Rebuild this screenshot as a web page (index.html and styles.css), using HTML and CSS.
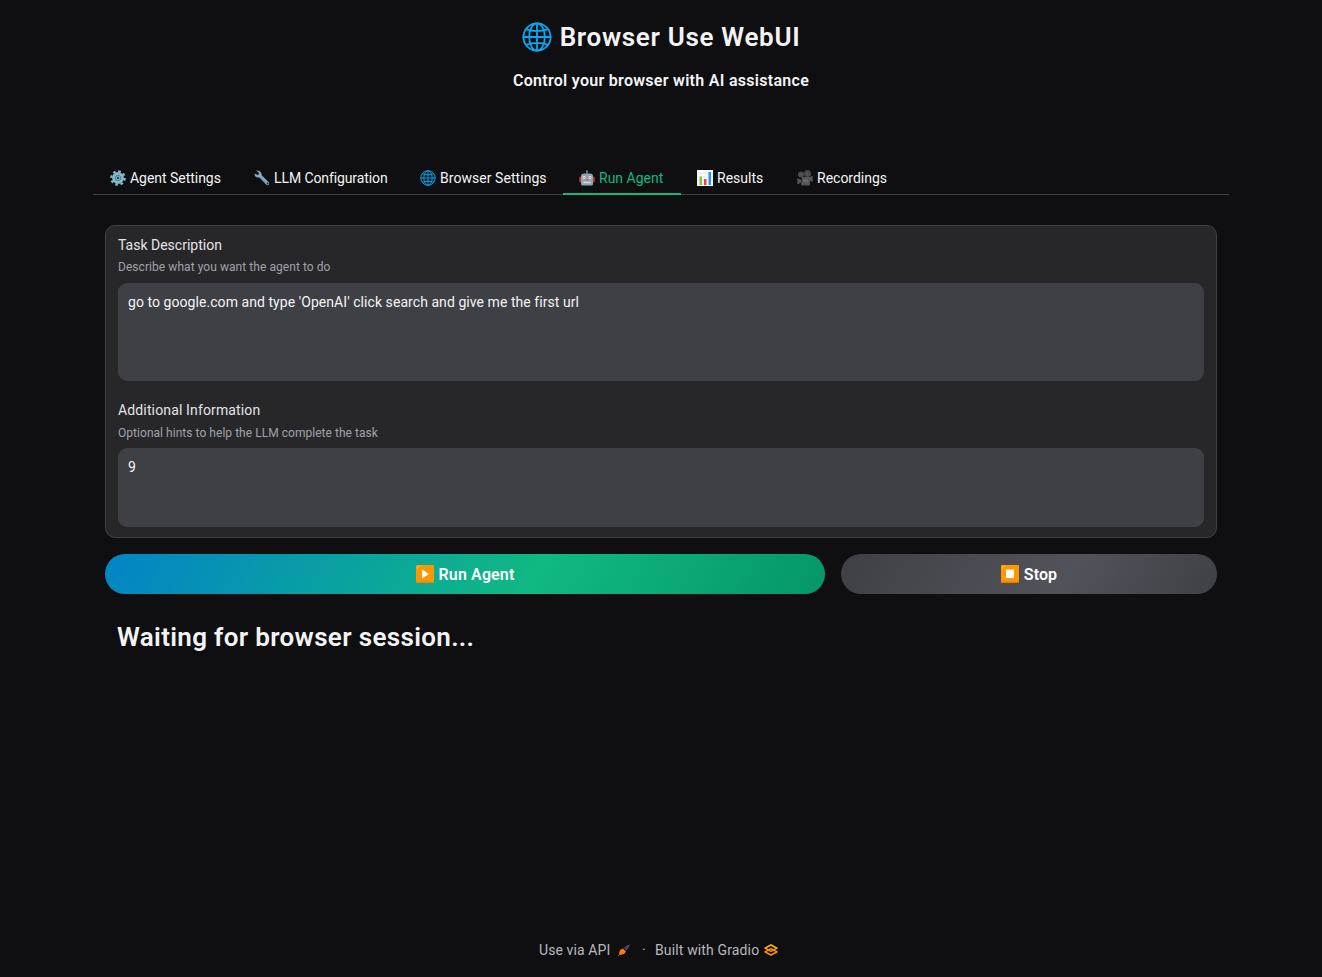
FILE: index.html
```html
<!DOCTYPE html>
<html lang="en">
<head>
<meta charset="utf-8">
<title>Browser Use WebUI</title>
<link rel="stylesheet" href="styles.css">
</head>
<body>
<svg class="defs" aria-hidden="true">
  <symbol id="globe" viewBox="0 0 30 30"><g fill="none" stroke="#03a9f4" stroke-width="1.8"><circle cx="15" cy="15" r="13.6"/><ellipse cx="15" cy="15" rx="7.8" ry="13.6"/><path d="M15 1.4v27.2M1.4 15h27.2M4 7.2c6 2.5 16 2.5 22 0M4 22.8c6-2.5 16-2.5 22 0"/></g></symbol>
</svg>
<main class="page">
  <header class="header">
    <h1 class="title"><svg class="title-icon"><use href="#globe"/></svg><span>Browser Use WebUI</span></h1>
    <h3 class="subtitle">Control your browser with AI assistance</h3>
  </header>
  <nav class="tabs">
    <button class="tab tab-agent"><svg class="emoji" viewBox="0 0 16 16"><g fill="none" stroke="#83b9ca"><circle cx="8" cy="8" r="4.3" stroke-width="3.2"/><circle cx="8" cy="8" r="6.7" stroke-width="2.3" stroke-dasharray="2.6 2.66"/></g><circle cx="8" cy="8" r="2.9" fill="#5e8d9c"/><circle cx="8" cy="8" r="2" fill="#83b9ca"/><circle cx="8" cy="8" r="1" fill="#17242a"/></svg><span>Agent Settings</span></button>
    <button class="tab tab-llm"><svg class="emoji" viewBox="0 0 16 16"><path d="M5.800 5.700l7.800 7.800" stroke="#82aec0" stroke-width="3.200" stroke-linecap="round"/><path d="M2.200.6l2.500 1.800.2 2-1.300.7L.5 3.400C.4 6 2.200 8 5.400 7.500L7.600 5.300C8 2.500 5.500.2 2.200.6z" fill="#82aec0"/><circle cx="13.600" cy="13.600" r="1" fill="#263238"/><path d="M6.500 7l5 5" stroke="#648f9f" stroke-width=".7"/></svg><span>LLM Configuration</span></button>
    <button class="tab tab-browser"><svg class="emoji"><use href="#globe"/></svg><span>Browser Settings</span></button>
    <button class="tab tab-run active"><svg class="emoji" viewBox="0 0 16 16"><path d="M8 4V2" stroke="#90a4ae" stroke-width="1"/><circle cx="8" cy="1.300" r="1" fill="#78909c"/><path d="M.3 8q0-1.500 1.500-1.500v6Q.3 12.500.3 11zM15.700 8q0-1.500-1.500-1.500v6q1.500 0 1.500-1.500z" fill="#e53935"/><path d="M2 6q0-2.500 3-2.500h6q3 0 3 2.500v8q0 1.500-1.500 1.500h-9Q2 15.500 2 14z" fill="#90a4ae"/><circle cx="5" cy="7.500" r="1.400" fill="#eee"/><circle cx="11" cy="7.500" r="1.400" fill="#eee"/><circle cx="5" cy="7.500" r=".6" fill="#d32f2f"/><circle cx="11" cy="7.500" r=".6" fill="#d32f2f"/><path d="M8 8.800l.8 1.600H7.200z" fill="#d32f2f"/><path d="M4.500 12.500h7" stroke="#eee" stroke-width="1.500" stroke-dasharray="1.400 .5"/></svg><span>Run Agent</span></button>
    <button class="tab tab-results"><svg class="emoji" viewBox="0 0 16 16"><path fill="#fafafa" d="M0 0h16v16H0z"/><path d="M0 3.500h16M0 7h16M0 10.500h16M0 14h16" stroke="#ddd" stroke-width=".6"/><path fill="#8bc34a" d="M2.500 6.500H5V15H2.500z"/><path fill="#f44336" d="M7 9h2.500v6H7z"/><path fill="#2196f3" d="M11.500 2H14v13h-2.500z"/></svg><span>Results</span></button>
    <button class="tab tab-recordings"><svg class="emoji" viewBox="0 0 16 16"><circle cx="4" cy="4.500" r="3.100" fill="#4a4a4a"/><circle cx="10.500" cy="3.600" r="3.500" fill="#484848"/><circle cx="4" cy="4.500" r=".8" fill="#606060"/><circle cx="10.500" cy="3.600" r="1" fill="#606060"/><path d="M5 7h8l2.700-1.300v6L13 11v3.500q0 1-1 1H5q-1 0-1-1zM.3 8l3.700 2v2.500L.3 14.500z" fill="#555"/><path d="M6 9h5v3H6z" fill="#666"/></svg><span>Recordings</span></button>
  </nav>
  <section class="content">
    <div class="panel">
      <label class="field"><span class="label label-task">Task Description</span><span class="info info-task">Describe what you want the agent to do</span><span class="input input-task">go to google.com and type 'OpenAI' click search and give me the first url</span></label>
      <label class="field"><span class="label label-extra">Additional Information</span><span class="info info-extra">Optional hints to help the LLM complete the task</span><span class="input input-extra">9</span></label>
    </div>
    <div class="actions">
      <button class="action run"><svg class="action-icon" viewBox="0 0 18 18"><rect width="18" height="18" rx="1" fill="#ff9800"/><path d="M0 16.500h18V18H0z" fill="#d98a20"/><path d="M1 4Q1 1 4 1" stroke="#ffbd52" fill="none"/><path d="M6 4.500v9l7-4.500z" fill="#fff"/></svg><span>Run Agent</span></button>
      <button class="action stop"><svg class="action-icon" viewBox="0 0 18 18"><rect width="18" height="18" rx="1" fill="#ff9800"/><path d="M0 16.500h18V18H0z" fill="#ef7c00"/><path d="M1 4Q1 1 4 1" stroke="#ffbd52" fill="none"/><path d="M5 4.500h8v8.500H5z" fill="#fff"/></svg><span>Stop</span></button>
    </div>
    <h1 class="waiting">Waiting for browser session...</h1>
  </section>
  <footer class="footer">
    <span class="api">Use via API</span>
    <svg class="rocket" viewBox="0 0 12 12"><path d="M0 12l2.500-2.500" stroke="#b85c0a" stroke-width="1"/><path d="M2 6l3-1.500L8 7.500 6.300 9.800 2.500 11 1 9.500z" fill="#ff7c00"/><path d="M6 4L8.500 1.500l2-.5L12 0l-.7 2-.5 1.700L8.500 6.500z" fill="#3c4963"/><path d="M5 3.800l3.500 3.500" stroke="#20283a" stroke-width=".7"/></svg>
    <span class="dot">·</span>
    <span class="built">Built with Gradio</span>
    <svg class="gradio" viewBox="0 0 14 12"><path d="M7 1l6 3.200-6 3.200-6-3.200zM7 4.600l6 3.200-6 3.200-6-3.200z" fill="none" stroke="#f90" stroke-width="1.500" stroke-linejoin="round"/><path d="M1 4.200L7 1l6 3.200" fill="none" stroke="#ffb000" stroke-width="1.200"/></svg>
  </footer>
</main>
</body>
</html>
```
FILE: styles.css
```css
* { box-sizing: border-box; }
body { margin: 0; background: #0f0f11; color: #f4f4f5; font-family: Roboto, "Noto Sans", sans-serif; font-size: 14px; }
button { font: inherit; color: inherit; border: 0; background: none; padding: 0; margin: 0; }
span { white-space: nowrap; }
svg { display: block; flex: none; }
.defs { display: none; }
.page { height: 977px; padding: 20px 93px 0; display: flex; flex-direction: column; }
.header { height: 142px; display: flex; flex-direction: column; align-items: center; }
.title { display: flex; align-items: center; gap: 8px; height: 34px; margin: 0; font-size: 26px; font-weight: 600; letter-spacing: .68px; }
.title-icon { width: 30px; height: 30px; }
.subtitle { margin: 17px 0 0; font-size: 16px; line-height: 20px; font-weight: 600; letter-spacing: .29px; }
.tabs { display: flex; height: 33px; border-bottom: 1px solid #3f3f46; }
.tab { display: flex; align-items: center; gap: 4px; height: 33px; padding: 1px 0 0 17px; border-bottom: 2px solid transparent; }
.emoji { width: 16px; height: 16px; }
.tab-agent { width: 144px; letter-spacing: -.03px; }
.tab-llm { width: 166px; letter-spacing: -.1px; }
.tab-browser { width: 160px; letter-spacing: .05px; }
.tab-run { width: 118px; padding-left: 16px; }
.tab-results { width: 99px; padding-left: 16px; }
.active { color: #10b981; border-color: #10b981; }
.content { padding: 30px 12px 0; height: 741px; }
.panel { height: 313px; padding: 9px 12px 10px; background: #27272a; border: 1px solid #3f3f46; border-radius: 10px; display: flex; flex-direction: column; gap: 19px; }
.field { display: flex; flex-direction: column; }
.label { line-height: 20px; color: #e4e4e7; }
.label-extra { letter-spacing: .14px; }
.info { margin-top: 4px; height: 24px; font-size: 12px; line-height: 17px; color: #a1a1aa; }
.info-task { letter-spacing: .06px; }
.info-extra { padding-top: 1px; letter-spacing: .04px; }
.input { padding: 9px 10px; line-height: 20px; background: #3f3f46; border-radius: 9px; }
.input-task { height: 98px; letter-spacing: .06px; }
.input-extra { height: 79px; }
.actions { display: flex; gap: 16px; margin-top: 16px; }
.action { display: flex; align-items: center; justify-content: center; gap: 5px; height: 40px; border-radius: 20px; font-size: 16px; font-weight: 600; letter-spacing: .13px; color: #fff; }
.run { width: 720px; background: linear-gradient(120deg, #0284c7 0%, #10b981 60%, #059669 100%); }
.stop { width: 376px; background: linear-gradient(120deg, #3f4045 0%, #52525b 60%, #3f4045 100%); }
.action-icon { width: 18px; height: 18px; }
.waiting { margin: 26px 12px 0; font-size: 26px; line-height: 34px; font-weight: 600; letter-spacing: .34px; }
.footer { display: flex; align-items: center; height: 28px; padding-left: 446px; color: #b6b8bd; }
.api { width: 79px; letter-spacing: .1px; }
.rocket { width: 12px; height: 12px; }
.dot { width: 25px; padding-left: 12px; }
.built { width: 109px; letter-spacing: .14px; }
.gradio { width: 14px; height: 12px; }
```
